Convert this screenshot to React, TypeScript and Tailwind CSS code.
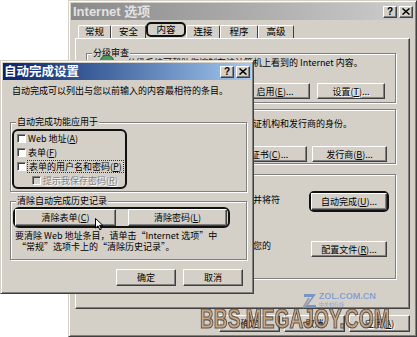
import React from "react";

const F = "font-['Noto_Sans_CJK_SC','Noto_Sans',sans-serif]";
const BTN =
  "flex items-center justify-center bg-[#d4d0c8] border border-t-white border-l-white border-r-[#404040] border-b-[#404040] shadow-[inset_-1px_-1px_0_#808080] text-[9px] leading-none text-black whitespace-nowrap";
const DIS = "text-[#808080] [text-shadow:1px_1px_0_#fff]";
const FS = "border border-[#808080] shadow-[inset_1px_1px_0_#fff,1px_1px_0_#fff]";
const LEG = "ml-[5px] px-[1px] bg-[#d4d0c8] text-[9px] leading-[10px]";

function TitleButtons() {
  return (
    <div className="flex gap-[2px]">
      <div className={`${BTN} w-[14px] h-[12px] !text-[10px] font-bold font-['Liberation_Sans',sans-serif]`}>?</div>
      <div className={`${BTN} w-[14px] h-[12px]`}>
        <svg width="8" height="7" viewBox="0 0 8 7">
          <path d="M0.5 0.5 L7.5 6.5 M7.5 0.5 L0.5 6.5" stroke="#000" strokeWidth="1.5" />
        </svg>
      </div>
    </div>
  );
}

function Check({ disabled }: { disabled?: boolean }) {
  return (
    <span
      className={`w-[9px] h-[9px] shrink-0 border border-t-[#808080] border-l-[#808080] border-r-white border-b-white shadow-[inset_1px_1px_0_#404040] ${
        disabled ? "bg-[#d4d0c8]" : "bg-white"
      }`}
    />
  );
}

function BackDialog() {
  const tabs = [
    { t: "常规", w: "w-[33px]" },
    { t: "安全", w: "w-[35px]" },
    { t: "内容", w: "w-[40px]", sel: true },
    { t: "连接", w: "w-[34px]" },
    { t: "程序", w: "w-[38px]" },
    { t: "高级", w: "w-[36px]" },
  ];
  return (
    <div className="absolute left-[68px] top-0 w-[349px] h-[337px] bg-[#d4d0c8] border border-t-[#d4d0c8] border-l-[#d4d0c8] border-r-[#404040] border-b-[#404040] shadow-[inset_1px_1px_0_#fff,inset_-1px_-1px_0_#808080] p-[2px] flex flex-col">
      <div className="h-[17px] shrink-0 flex items-center justify-between bg-linear-to-r from-[#8a8a8a] to-[#cdcdcd] pl-[2px] pr-[1px]">
        <span className="text-[13px] font-bold text-[#e2e2e2] leading-none font-['Liberation_Sans','Noto_Sans_CJK_SC',sans-serif]">
          Internet 选项
        </span>
        <TitleButtons />
      </div>
      <div className="px-[4px] flex flex-col">
        <div className="h-[18px] flex items-end pl-[3px]">
          {tabs.map((tb) =>
            tb.sel ? (
              <div
                key={tb.t}
                className={`${tb.w} h-[15px] mb-[1px] flex items-center justify-center border-2 border-[#111] rounded-[5px] text-[9.5px] leading-none`}
              >
                {tb.t}
              </div>
            ) : (
              <div
                key={tb.t}
                className={`${tb.w} h-[13px] flex items-center justify-center border-t border-l border-t-white border-l-white border-r border-r-[#404040] rounded-t-[2px] text-[9.5px] leading-none`}
              >
                {tb.t}
              </div>
            )
          )}
        </div>
        <div className="h-[271px] border border-t-white border-l-white border-r-[#404040] border-b-[#404040] shadow-[inset_-1px_-1px_0_#808080] flex flex-col">
          <fieldset className={`${FS} ml-[10px] mt-[9px] w-[310px]`}>
            <legend className={LEG}>分级审查</legend>
            <div className="flex items-start h-[10px]">
              <div className="ml-[13px] w-[14px] h-[12px] -mt-[3px] rounded-full bg-[#4a9a5a] border border-[#2a5a30]" />
              <span className="ml-[13px] text-[9px] leading-[10px] whitespace-nowrap">
                分级系统可帮助您控制在该计算机上看到的 Internet 内容。
              </span>
            </div>
            <div className="flex justify-end gap-[7px] pr-[10px] mt-[15px] pb-[3px]">
              <div className={`${BTN} w-[70px] h-[16px]`}>启用(<u>E</u>)...</div>
              <div className={`${BTN} ${DIS} w-[68px] h-[16px]`}>设置(<u>T</u>)...</div>
            </div>
          </fieldset>
          <fieldset className={`${FS} ml-[10px] mt-[1px] w-[310px]`}>
            <legend className={LEG}>证书</legend>
            <div className="flex items-start mt-[5px] h-[10px]">
              <div className="ml-[13px] w-[14px] h-[14px] -mt-[2px] bg-[#e8d890] border border-[#806020]" />
              <span className="ml-[13px] text-[9px] leading-[10px] whitespace-nowrap">
                使用证书可以确认您自己以及认证机构和发行商的身份。
              </span>
            </div>
            <div className="flex justify-end gap-[5px] pr-[8px] mt-[17px] pb-[1px]">
              <div className={`${BTN} w-[75px] h-[16px]`}>证书(<u>C</u>)...</div>
              <div className={`${BTN} w-[75px] h-[16px]`}>发行商(<u>B</u>)...</div>
            </div>
          </fieldset>
          <fieldset className={`${FS} ml-[10px] mt-[5px] w-[310px] h-[110px]`}>
            <legend className={LEG}>个人信息</legend>
            <div className="flex justify-between items-start mt-[12px] pr-[6px]">
              <div className="flex items-start">
                <div className="ml-[13px] mt-[3px] w-[14px] h-[14px] bg-[#c0d8f0] border border-[#305080]" />
                <span className="ml-[13px] mt-[3px] text-[9px] leading-[11px] whitespace-nowrap">
                  自动完成功能保存以前的输入，并将符
                  <br />
                  合的项目推荐给您。
                </span>
              </div>
              <div className="border-2 border-[#111] rounded-[5px]">
                <div className={`${BTN} w-[76px] h-[17px]`}>自动完成(<u>U</u>)...</div>
              </div>
            </div>
            <div className="flex justify-between items-start mt-[23px] pr-[6px]">
              <div className="flex items-start">
                <div className="ml-[13px] mt-[2px] w-[14px] h-[14px] bg-[#d8c0a0] border border-[#605030]" />
                <span className="ml-[13px] mt-[1px] text-[9px] leading-[11px] whitespace-nowrap">
                  配置文件助理能安全地存储有关您的
                  <br />
                  个人信息。
                </span>
              </div>
              <div className="border-2 border-transparent">
                <div className={`${BTN} w-[76px] h-[16px]`}>配置文件(<u>R</u>)...</div>
              </div>
            </div>
          </fieldset>
        </div>
        <div className="flex justify-end gap-[4px] mt-[6px]">
          <div className={`${BTN} w-[61px] h-[17px]`}>确定</div>
          <div className={`${BTN} w-[61px] h-[17px]`}>取消</div>
          <div className={`${BTN} ${DIS} w-[61px] h-[17px]`}>应用(<u>A</u>)</div>
        </div>
      </div>
    </div>
  );
}

function FrontDialog() {
  return (
    <div className="absolute left-0 top-[60px] w-[254px] h-[234px] z-10 bg-[#d4d0c8] border border-t-[#d4d0c8] border-l-[#d4d0c8] border-r-[#404040] border-b-[#404040] shadow-[inset_1px_1px_0_#fff,inset_-1px_-1px_0_#808080] p-[2px] flex flex-col">
      <div className="h-[17px] shrink-0 flex items-center justify-between bg-linear-to-r from-[#0a246a] to-[#a6caf0] pl-[1px] pr-[1px]">
        <span className="text-[12.5px] font-bold text-white leading-none">自动完成设置</span>
        <TitleButtons />
      </div>
      <div className="pl-[9px] mt-[6px] text-[9px] leading-[10px] whitespace-nowrap">
        自动完成可以列出与您以前输入的内容最相符的条目。
      </div>
      <fieldset className={`${FS} ml-[7px] mt-[21px] w-[237px]`}>
        <legend className={LEG}>自动完成功能应用于</legend>
        <div className="ml-[1px] mt-[2px] w-[115px] border-2 border-[#111] rounded-[6px] flex flex-col">
          <div className="h-[14px] flex items-center gap-[2px] pl-[3px] text-[9px] leading-none whitespace-nowrap">
            <Check />
            <span>
              Web 地址(<u>A</u>)
            </span>
          </div>
          <div className="h-[14px] flex items-center gap-[2px] pl-[3px] text-[9px] leading-none whitespace-nowrap">
            <Check />
            <span>
              表单(<u>F</u>)
            </span>
          </div>
          <div className="h-[14px] flex items-center gap-[1px] pl-[3px] text-[9px] leading-none whitespace-nowrap">
            <Check />
            <span className="border border-dotted border-[#333] px-[1px] py-[1px]">
              表单的用户名和密码(<u>P</u>)
            </span>
          </div>
          <div className="h-[14px] flex items-center gap-[2px] pl-[18px] text-[9px] leading-none whitespace-nowrap">
            <Check disabled />
            <span className={DIS}>
              提示我保存密码(<u>R</u>)
            </span>
          </div>
        </div>
        <div className="h-[2px]" />
      </fieldset>
      <fieldset className={`${FS} ml-[7px] mt-[4px] w-[237px]`}>
        <legend className={LEG}>清除自动完成历史记录</legend>
        <div className="ml-[2px] mt-[1px] w-[217px] border-2 border-[#111] rounded-[6px] flex gap-[12px] pr-[1px]">
          <div className={`${BTN} w-[101px] h-[17px]`}>清除表单(<u>C</u>)</div>
          <div className={`${BTN} w-[99px] h-[17px]`}>清除密码(<u>L</u>)</div>
        </div>
        <div className="mt-[2px] text-[9px] leading-[11px] whitespace-nowrap pb-[7px]">
          <div className="pl-[4px]">要清除 Web 地址条目，请单击“Internet 选项”中</div>
          <div className="pl-[6px]">“常规”选项卡上的“清除历史记录”。</div>
        </div>
      </fieldset>
      <div className="flex justify-end gap-[7px] pr-[8px] mt-[9px]">
        <div className={`${BTN} w-[60px] h-[17px]`}>确定</div>
        <div className={`${BTN} w-[60px] h-[17px]`}>取消</div>
      </div>
    </div>
  );
}

export default function App() {
  return (
    <div className={`relative w-[417px] h-[337px] bg-white overflow-hidden text-black ${F}`}>
      <BackDialog />
      <FrontDialog />
      {/* cursor */}
      <svg className="absolute left-[95px] top-[218px] z-20" width="9" height="13" viewBox="0 0 9 13">
        <path d="M0.5 0.5 L0.5 10 L3 7.8 L4.8 11.8 L6.3 11.1 L4.6 7.3 L7.8 7.3 Z" fill="#fff" stroke="#000" strokeWidth="1" />
      </svg>
      {/* watermarks */}
      <div className="absolute left-[303px] top-[292px] z-20 flex items-start gap-[1px] opacity-90">
        <svg width="15" height="17" viewBox="0 0 15 17">
          <path d="M1 2 L13 2 L5 13 L13 13 L13 16 L1 16 L9 5 L1 5 Z" fill="#6f8fc8" />
          <path d="M0 16 L6 6" stroke="#9a9a9a" strokeWidth="2" />
        </svg>
        <div className="flex flex-col">
          <span className="text-[9px] font-bold leading-[9px] text-[#7d9ad0] font-['Liberation_Sans',sans-serif]">
            ZOL.COM.CN
          </span>
          <span className="text-[5px] leading-[6px] text-[#8aa0c8]">中关村在线</span>
        </div>
      </div>
      <div className="absolute left-[200px] top-[303px] z-20 origin-left scale-x-[0.71] text-[27px] leading-[32px] font-bold text-[#c9a078] [-webkit-text-stroke:1.2px_#4e4a46] font-['Liberation_Sans',sans-serif] opacity-90 whitespace-nowrap">
        BBS.MEGAJOY.COM
      </div>
    </div>
  );
}
